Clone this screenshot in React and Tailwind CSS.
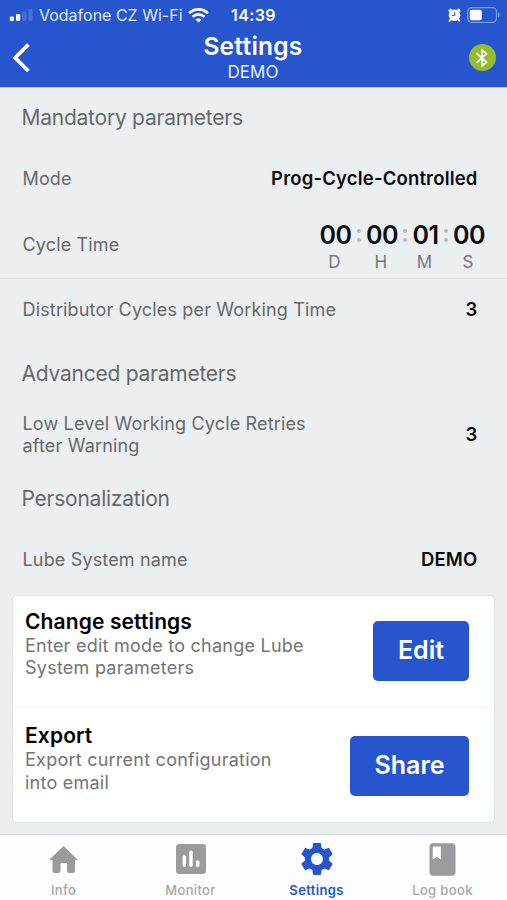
import React from "react";
import { MdSettings, MdBook } from "react-icons/md";

function StatusBar() {
  return (
    <div className="flex h-[30px] items-center pl-[9px] pr-[7px]">
      <svg width="24" height="12" viewBox="0 0 24 12" fill="#fff">
        <rect x="0.8" y="7.5" width="4.2" height="4.5" rx="1.2" />
        <rect x="7" y="5" width="4.2" height="7" rx="1.2" />
        <rect x="13.2" y="2.5" width="4.2" height="9.5" rx="1.2" opacity="0.15" />
        <rect x="19.4" y="0" width="4.2" height="12" rx="1.2" opacity="0.15" />
      </svg>
      <span className="ml-[6px] w-[144px] text-[16px] leading-5 tracking-[0px] text-[#e0e9fb]">Vodafone CZ Wi-Fi</span>
      <svg className="ml-[5px]" width="21" height="15" viewBox="0 0 21 15" fill="none" stroke="#fff">
        <path d="M1.2 5.2C6.5 0.2 14.5 0.2 19.8 5.2" strokeWidth="2.7" />
        <path d="M4.6 8.7C8 5.6 13 5.6 16.4 8.7" strokeWidth="2.6" />
        <path d="M10.5 14.6L7.5 11.6C9.2 10.1 11.8 10.1 13.5 11.6Z" fill="#fff" stroke="none" />
      </svg>
      <span className="ml-[22px] text-[16px] font-semibold leading-5 tracking-[0.4px]">14:39</span>
      <svg className="ml-auto" width="13" height="14" viewBox="0 0 13 14">
        <circle cx="6.5" cy="7.2" r="5.8" fill="#fff" />
        <path d="M1.5 2.8L2.8 1.6M11.5 2.8L10.2 1.6M2.6 11.6L1.8 12.6M10.4 11.6L11.2 12.6" stroke="#fff" strokeWidth="2" strokeLinecap="round" />
        <path d="M6.8 4V7.6H4" stroke="#2755cd" strokeWidth="1" fill="none" />
      </svg>
      <svg className="ml-[6px]" width="33" height="16" viewBox="0 0 33 16">
        <rect x="0.7" y="0.7" width="28.8" height="14.6" rx="4" fill="none" stroke="#7f9de5" strokeWidth="1.2" />
        <rect x="2.8" y="2.8" width="12" height="10.4" rx="2" fill="#fff" />
        <path d="M31 5.2Q32.6 6 32.6 8T31 10.8Z" fill="#7f9de5" />
      </svg>
    </div>
  );
}

function Header() {
  return (
    <header className="flex h-[88px] shrink-0 flex-col border-b border-[#bccbee] bg-[#2755cd] text-white">
      <StatusBar />
      <div className="flex flex-1 items-start justify-between pl-[12px] pr-[11px]">
        <div className="w-[28px] pt-[13px]">
          <svg width="18" height="30" viewBox="0 0 18 30" fill="none" stroke="#fff" strokeWidth="3.7">
            <path d="M16.4 1.6L3.2 14.8L16.4 28" />
          </svg>
        </div>
        <div className="flex flex-col items-center pt-[2px]">
          <h1 className="text-[24.5px] font-semibold leading-[28px] tracking-[0.25px]">Settings</h1>
          <p className="text-[17px] leading-[24px] text-[#e9effc]">DEMO</p>
        </div>
        <div className="flex w-[30px] justify-end pt-[14px]">
          <span className="flex size-[27px] items-center justify-center rounded-full bg-[#93bd2f]">
            <svg width="14" height="20" viewBox="0 0 14 20" fill="none" stroke="#fff" strokeWidth="1.7">
              <path d="M1.5 5.2L11.5 14.3L7 18V2L11.5 5.7L1.5 14.8" />
            </svg>
          </span>
        </div>
      </div>
    </header>
  );
}

function Section({ children, className }) {
  return <h2 className={`flex items-center pl-[21.5px] text-[21px] tracking-[-0.24px] text-[#66696b] ${className}`}>{children}</h2>;
}

function Row({ label, className, children }) {
  return (
    <div className={`flex items-center justify-between pl-[22.5px] text-[18px] leading-[22.5px] tracking-[0.16px] text-[#66696b] ${className}`}>
      <div>{label}</div>
      {children}
    </div>
  );
}

function Value({ children }) {
  return <span className="mr-[29.5px] pb-[2px] text-[18.5px] font-semibold tracking-[0.17px] text-[#0c0d0e]">{children}</span>;
}

function TimePart({ value, unit, className }) {
  return (
    <div className={`flex flex-col items-center ${className}`}>
      <span className="text-[25px] font-semibold leading-[30px] tracking-[-0.6px] text-[#0c0d0e]">{value}</span>
      <span className="mr-[2px] text-[17px] leading-[24px] text-[#76797b]">{unit}</span>
    </div>
  );
}

function Colon() {
  return (
    <div className="flex h-[30px] w-[15px] flex-col items-center justify-center gap-[5px]">
      <i className="size-[4px] rounded-full bg-[#b5b8ba]" />
      <i className="size-[4px] rounded-full bg-[#b5b8ba]" />
    </div>
  );
}

function Action({ title, lines, button, className, buttonClass }) {
  return (
    <div className={`flex items-center justify-between pl-[12px] pr-[25px] ${className}`}>
      <div className="pb-[14px] text-[18px] leading-[22.5px] tracking-[0.24px] text-[#727476]">
        <h3 className="text-[21px] font-semibold leading-[26px] tracking-[0.12px] text-black">{title}</h3>
        <p>{lines[0]}<br />{lines[1]}</p>
      </div>
      <button className={`h-[60px] rounded-[5px] bg-[#2755cd] text-[25px] font-semibold text-white ${buttonClass}`}>{button}</button>
    </div>
  );
}

function Tab({ icon, label, active, className }) {
  return (
    <div className={`flex flex-col items-center ${active ? "text-[#2755cd]" : "text-[#999b9d]"} ${className}`}>
      <div className="flex h-[48px] items-center justify-center">{icon}</div>
      <span className={`text-[13px] leading-[15px] tracking-[0.35px] ${active ? "font-semibold" : "font-medium text-[#a6a8aa]"}`}>{label}</span>
    </div>
  );
}

export default function App() {
  return (
    <div className="flex h-[900px] w-[507px] flex-col overflow-hidden whitespace-nowrap bg-[#ebeff0] font-['Inter','Liberation_Sans',sans-serif]">
      <Header />
      <main className="flex h-[746px] shrink-0 flex-col">
        <Section className="h-[60px]">Mandatory parameters</Section>
        <Row className="h-[66px] border-b border-[#e6ebec] pb-[2px]" label="Mode">
          <Value>Prog-Cycle-Controlled</Value>
        </Row>
        <Row className="h-[65px] border-b border-[#dfe4e6]" label={<span className="block pb-[2px]">Cycle Time</span>}>
          <div className="mr-[22.5px] flex pt-[2px]">
            <TimePart value="00" unit="D" className="w-[32px]" />
            <Colon />
            <TimePart value="00" unit="H" className="w-[31px]" />
            <Colon />
            <TimePart value="01" unit="M" className="w-[26px]" />
            <Colon />
            <TimePart value="00" unit="S" className="w-[31px]" />
          </div>
        </Row>
        <Row className="h-[62px]" label="Distributor Cycles per Working Time">
          <Value>3</Value>
        </Row>
        <Section className="h-[64px] pt-[2px]">Advanced parameters</Section>
        <Row className="h-[60px]" label={<>Low Level Working Cycle Retries<br />after Warning</>}>
          <Value>3</Value>
        </Row>
        <Section className="h-[66px] pt-[2px]">Personalization</Section>
        <Row className="h-[58px]" label="Lube System name">
          <Value>DEMO</Value>
        </Row>
        <div className="mx-[12px] mt-[6px] h-[228px] rounded-[5px] border border-[#dde2e3] bg-white">
          <Action
            className="h-[112px] border-b border-[#f1f3f4] pb-[1px]"
            title="Change settings"
            lines={["Enter edit mode to change Lube", "System parameters"]}
            button="Edit"
            buttonClass="w-[96px]"
          />
          <Action
            className="h-[114px] pt-[1px]"
            title="Export"
            lines={["Export current configuration", "into email"]}
            button="Share"
            buttonClass="w-[119px]"
          />
        </div>
      </main>
      <nav className="flex flex-1 border-t border-[#d9dddf] bg-[#fcfdfd]">
        <Tab
          className="w-[127px]"
          label="Info"
          icon={
            <svg width="29" height="27" viewBox="0 0 29 27" fill="currentColor">
              <path d="M14.5 0L29 14H26V25Q26 27 24 27H20Q18 27 18 25V17H11.5V25Q11.5 27 9.5 27H5.5Q3.5 27 3.5 25V14H0Z" />
            </svg>
          }
        />
        <Tab
          className="w-[127px]"
          label="Monitor"
          icon={
            <svg width="30" height="30" viewBox="0 0 30 30">
              <rect width="30" height="30" rx="3.5" fill="currentColor" />
              <path d="M8.3 13V21.2M15 8.3V21.2M21.7 18V21.2" stroke="#fff" strokeWidth="3.5" strokeLinecap="round" />
            </svg>
          }
        />
        <Tab className="w-[125px]" label="Settings" active icon={<MdSettings size={40} />} />
        <Tab className="w-[127px]" label="Log book" icon={<MdBook size={39} />} />
      </nav>
    </div>
  );
}
